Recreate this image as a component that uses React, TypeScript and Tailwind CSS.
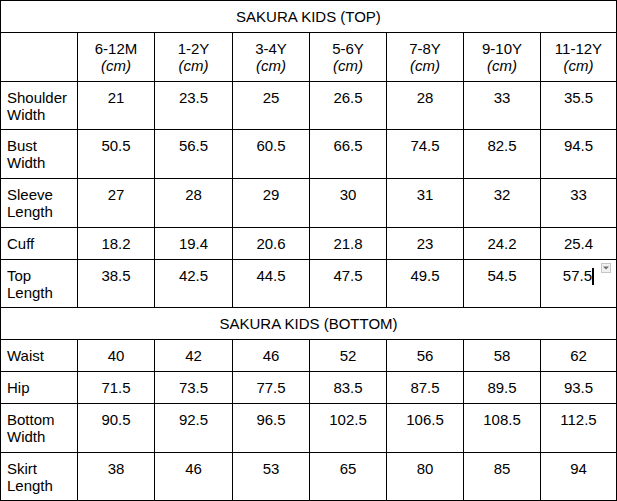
import React from 'react'

const sizes = ['6-12M', '1-2Y', '3-4Y', '5-6Y', '7-8Y', '9-10Y', '11-12Y']

type Row = { label: string; values: string[]; h: string }

const topRows: Row[] = [
  { label: 'Shoulder Width', values: ['21', '23.5', '25', '26.5', '28', '33', '35.5'], h: 'h-[47px]' },
  { label: 'Bust Width', values: ['50.5', '56.5', '60.5', '66.5', '74.5', '82.5', '94.5'], h: 'h-[48px]' },
  { label: 'Sleeve Length', values: ['27', '28', '29', '30', '31', '32', '33'], h: 'h-[48px]' },
  { label: 'Cuff', values: ['18.2', '19.4', '20.6', '21.8', '23', '24.2', '25.4'], h: 'h-[31px]' },
  { label: 'Top Length', values: ['38.5', '42.5', '44.5', '47.5', '49.5', '54.5', '57.5'], h: 'h-[47px]' },
]

const bottomRows: Row[] = [
  { label: 'Waist', values: ['40', '42', '46', '52', '56', '58', '62'], h: 'h-[31px]' },
  { label: 'Hip', values: ['71.5', '73.5', '77.5', '83.5', '87.5', '89.5', '93.5'], h: 'h-[31px]' },
  { label: 'Bottom Width', values: ['90.5', '92.5', '96.5', '102.5', '106.5', '108.5', '112.5'], h: 'h-[48px]' },
  { label: 'Skirt Length', values: ['38', '46', '53', '65', '80', '85', '94'], h: 'h-[47px]' },
]

// Cell currently being edited (cursor + dropdown button)
function EditingCell({ value, h }: { value: string; h: string }) {
  return (
    <div className={`relative bg-white ${h} pt-[7px] pr-[22px] flex justify-end items-start`}>
      <span>{value}</span>
      <span className="inline-block w-[2px] h-[17px] bg-black mt-[1px]"></span>
      <div className="absolute top-[3px] right-[5px] w-[10px] h-[10px] bg-[#f1f1f1] border border-[#c6c6c6] flex items-center justify-center">
        <svg width="6" height="4" viewBox="0 0 6 4">
          <path d="M0 0.5 L6 0.5 L3 3.5 Z" fill="#6b6b6b" />
        </svg>
      </div>
    </div>
  )
}

function DataRow({ row, editLast }: { row: Row; editLast?: boolean }) {
  return (
    <>
      <div className={`bg-white ${row.h} pt-[7px] pl-[6px] pr-[4px]`}>{row.label}</div>
      {row.values.map((v, i) =>
        editLast && i === row.values.length - 1 ? (
          <EditingCell key={i} value={v} h={row.h} />
        ) : (
          <div key={i} className={`bg-white ${row.h} pt-[7px] text-center`}>
            {v}
          </div>
        )
      )}
    </>
  )
}

function TitleRow({ title }: { title: string }) {
  return (
    <div className="col-span-8 bg-white h-[31px] pt-[7px] text-center">{title}</div>
  )
}

export default function App() {
  return (
    <div className="w-[617px] h-[501px] bg-white">
      <div
        className="grid grid-cols-[76px_76px_77px_76px_76px_76px_76px_75px] gap-px bg-black p-px text-black text-[15px] leading-[17px]"
        style={{ fontFamily: '"Liberation Sans", Arial, sans-serif' }}
      >
        <TitleRow title="SAKURA KIDS (TOP)" />

        {/* Size header */}
        <div className="bg-white h-[48px]"></div>
        {sizes.map((s) => (
          <div key={s} className="bg-white h-[48px] pt-[7px] text-center">
            <div>{s}</div>
            <div className="italic">(cm)</div>
          </div>
        ))}

        {topRows.map((r) => (
          <DataRow key={r.label} row={r} editLast={r.label === 'Top Length'} />
        ))}

        <TitleRow title="SAKURA KIDS (BOTTOM)" />

        {bottomRows.map((r) => (
          <DataRow key={r.label} row={r} />
        ))}
      </div>
    </div>
  )
}
